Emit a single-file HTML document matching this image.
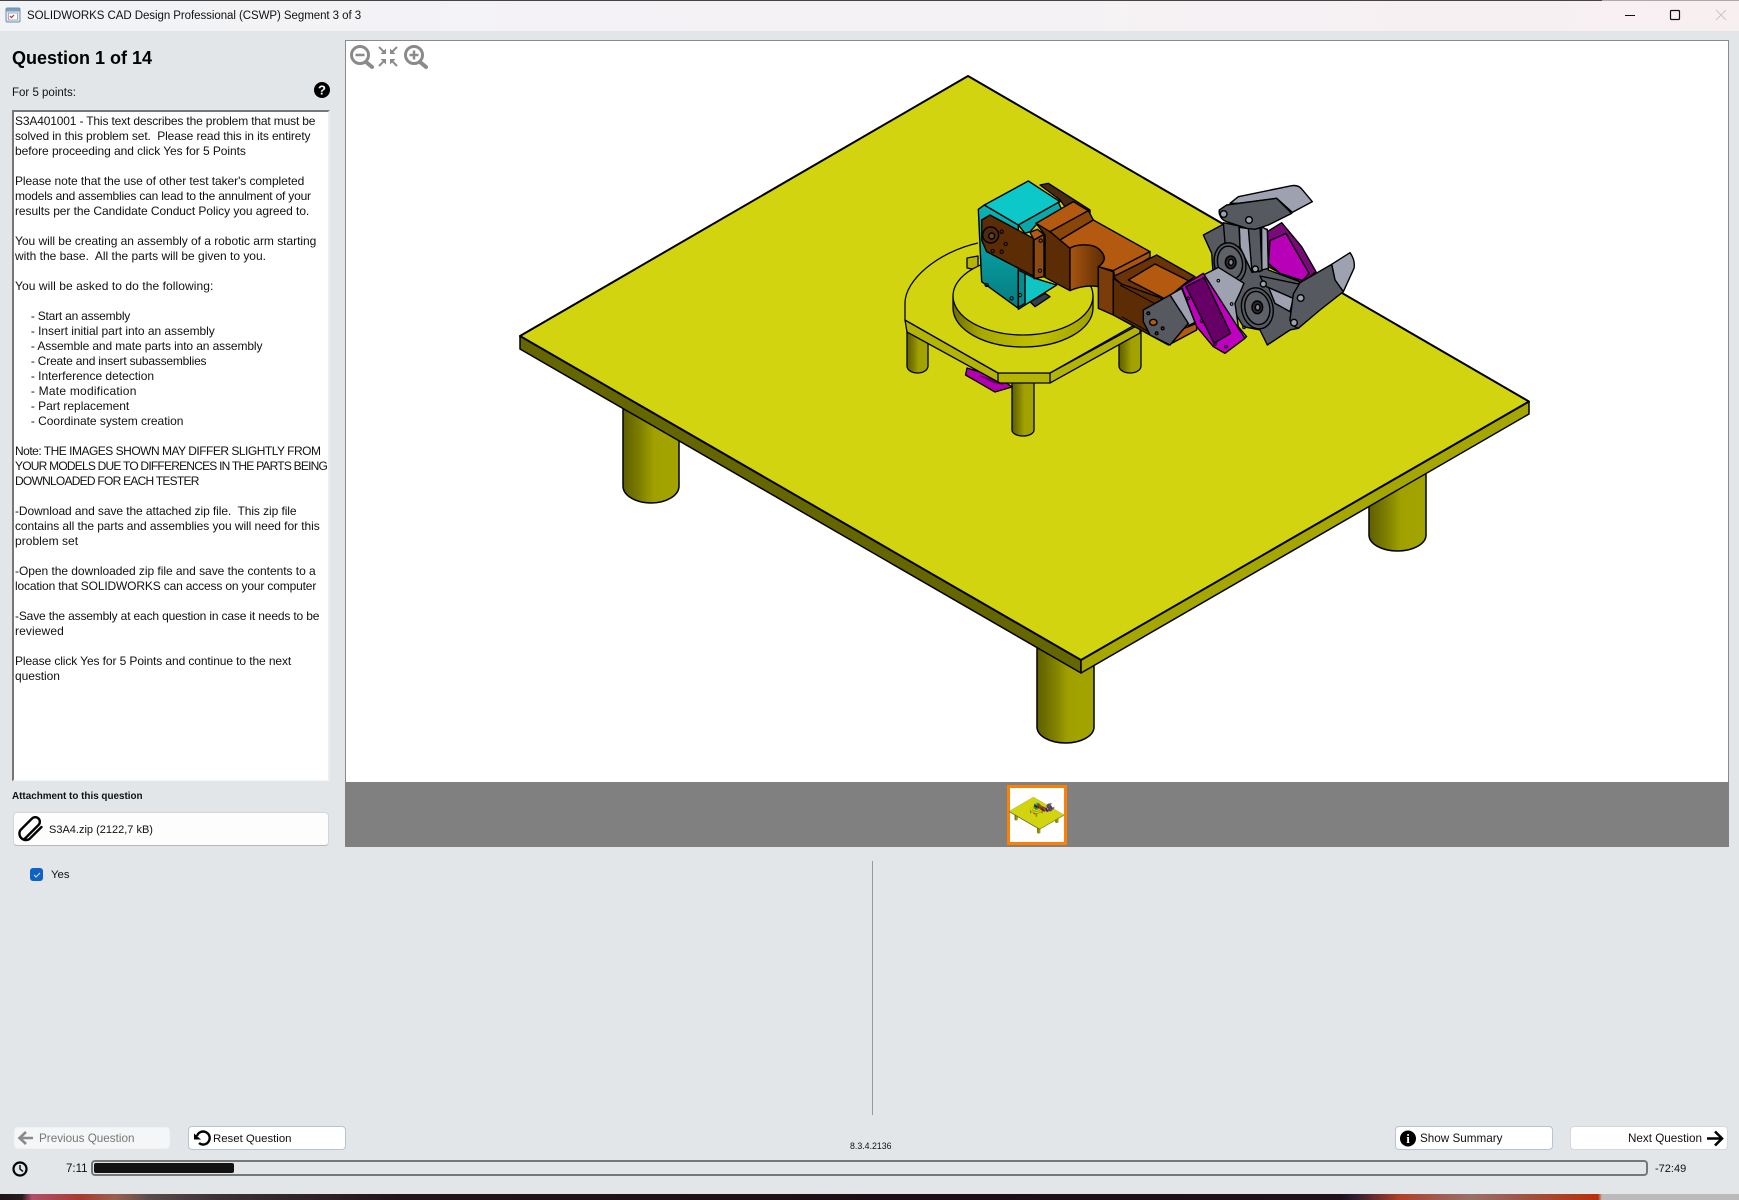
<!DOCTYPE html>
<html><head><meta charset="utf-8"><style>
html,body{margin:0;padding:0;width:1739px;height:1200px;overflow:hidden;background:#e2e6e9;font-family:"Liberation Sans",sans-serif;color:#111}
.a{position:absolute;white-space:nowrap}
.btn{position:absolute;box-sizing:border-box;background:#fdfdfd;border:1px solid #d5d8dc;border-radius:4px;font-size:11.7px;line-height:23px}
pre.a{margin:0;font:12px/15px "Liberation Sans",sans-serif;color:#111;white-space:pre;letter-spacing:-.16px}
</style></head><body>
<div class="a" style="left:0;top:0;width:1739px;height:31px;background:linear-gradient(90deg,#f2f3f6,#f5f2f5 60%,#f8eff1)"></div>
<div class="a" style="left:0;top:0;width:1602px;height:1px;background:#444"></div>
<div class="a" style="left:1602px;top:0;width:137px;height:1px;background:#aaa"></div>
<div class="a" style="left:27px;top:8px;font-size:11.5px;letter-spacing:-.06px;line-height:16px;">SOLIDWORKS CAD Design Professional (CSWP) Segment 3 of 3</div>
<div class="a" style="left:12px;top:46px;font-size:18px;font-weight:bold;line-height:24px;color:#000">Question 1 of 14</div>
<div class="a" style="left:12px;top:85px;font-size:11.5px;line-height:16px">For 5 points:</div>
<div class="a" style="left:12px;top:110px;width:318px;height:671px;box-sizing:border-box;background:#fff;border:1px solid #f4f5f6;border-top:2px solid #777;border-left:2px solid #777;border-right:2px solid #eceef0"></div>
<pre class="a" style="left:15px;top:114px">S3A401001 - This text describes the problem that must be
<span style="letter-spacing:-.11px">solved in this problem set.  Please read this in its entirety</span>
<span style="letter-spacing:-.06px">before proceeding and click Yes for 5 Points</span>

<span style="letter-spacing:-.07px">Please note that the use of other test taker's completed</span>
<span style="letter-spacing:-.2px">models and assemblies can lead to the annulment of your</span>
<span style="letter-spacing:-.06px">results per the Candidate Conduct Policy you agreed to.</span>

<span style="letter-spacing:-.03px">You will be creating an assembly of a robotic arm starting</span>
<span style="letter-spacing:-.01px">with the base.  All the parts will be given to you.</span>

<span style="letter-spacing:.07px">You will be asked to do the following:</span>

     <span style="letter-spacing:-.22px">- Start an assembly</span>
     <span style="letter-spacing:-.04px">- Insert initial part into an assembly</span>
     <span style="letter-spacing:-.11px">- Assemble and mate parts into an assembly</span>
     <span style="letter-spacing:-.2px">- Create and insert subassemblies</span>
     <span style="letter-spacing:-.01px">- Interference detection</span>
     <span style="letter-spacing:.23px">- Mate modification</span>
     <span style="letter-spacing:-.02px">- Part replacement</span>
     <span style="letter-spacing:-.03px">- Coordinate system creation</span>

<span style="letter-spacing:-.5px">Note: THE IMAGES SHOWN MAY DIFFER SLIGHTLY FROM</span>
<span style="letter-spacing:-.78px">YOUR MODELS DUE TO DIFFERENCES IN THE PARTS BEING</span>
<span style="letter-spacing:-.75px">DOWNLOADED FOR EACH TESTER</span>

<span style="letter-spacing:-.08px">-Download and save the attached zip file.  This zip file</span>
<span style="letter-spacing:-.07px">contains all the parts and assemblies you will need for this</span>
<span style="letter-spacing:.04px">problem set</span>

<span style="letter-spacing:-.04px">-Open the downloaded zip file and save the contents to a</span>
location that SOLIDWORKS can access on your computer

-Save the assembly at each question in case it needs to be
<span style="letter-spacing:.11px">reviewed</span>

<span style="letter-spacing:-.1px">Please click Yes for 5 Points and continue to the next</span>
<span style="letter-spacing:-.06px">question</span></pre>
<div class="a" style="left:12px;top:790px;font-size:9.9px;font-weight:bold;line-height:14px">Attachment to this question</div>
<div class="btn" style="left:13px;top:812px;width:316px;height:34px;background:#fdfdfd;border-color:#d4d6da;border-bottom-color:#b5b7ba"></div>
<div class="a" style="left:49px;top:822px;font-size:11px;line-height:16px">S3A4.zip (2122,7 kB)</div>
<div class="a" style="left:30px;top:868px;width:13px;height:13px;background:#0f62c5;border-radius:3px"></div>
<div class="a" style="left:51px;top:867px;font-size:11.4px;line-height:16px">Yes</div>
<div class="a" style="left:872px;top:861px;width:1px;height:254px;background:#9a9a9a"></div>

<div class="a" style="left:345px;top:40px;width:1384px;height:742px;box-sizing:border-box;background:#fff;border:1px solid #8a8a8a;border-bottom:none"></div>
<div class="a" style="left:345px;top:782px;width:1384px;height:65px;background:#808080"></div>
<div class="a" style="left:1007px;top:785px;width:60px;height:60px;box-sizing:border-box;background:#fff;border:3px solid #ff7f00"></div>

<div class="btn" style="left:14px;top:1127px;width:156px;height:22px;background:#f5f6f7;border-color:#f0f1f2;color:#777;padding-left:24px;line-height:22px">Previous Question</div>
<div class="btn" style="left:188px;top:1126px;width:158px;height:24px;background:#fff;border-color:#b5c5d5;padding-left:24px;font-size:11.4px;line-height:24px">Reset Question</div>
<div class="btn" style="left:1395px;top:1126px;width:158px;height:24px;background:#fff;border-color:#b5c5d5;padding-left:24px">Show Summary</div>
<div class="btn" style="left:1570px;top:1126px;width:158px;height:24px;background:#fff;border-color:#d5d8dc;text-align:right;padding-right:25px">Next Question</div>
<div class="a" style="left:850px;top:1140px;font-size:8.800px;line-height:12px">8.3.4.2136</div>
<div class="a" style="left:66px;top:1161px;font-size:11.5px;line-height:16px">7:11</div>
<div class="a" style="left:91px;top:1160px;width:1557px;height:16px;box-sizing:border-box;border:2px solid #777;border-radius:4px"></div>
<div class="a" style="left:94px;top:1163px;width:140px;height:10px;background:#111;border-radius:2px"></div>
<div class="a" style="left:1655px;top:1161px;font-size:11px;line-height:16px">-72:49</div>
<div class="a" style="left:0;top:1194px;width:1739px;height:6px;background:linear-gradient(90deg,#1c1414 0,#2a1a1c 22px,#b0506a 32px,#a83a30 80px,#9a6050 115px,#5a4a4a 150px,#3c3034 220px,#241418 400px,#1c0e14 900px,#201018 1340px,#2a1a30 1352px,#b0402a 1400px,#98706a 1470px,#a05040 1530px,#b8300a 1598px,#bbb 1602px,#bbb 1739px)"></div>

<svg class="a" style="left:0;top:0" width="1739" height="1200" viewBox="0 0 1739 1200">
<defs>
<linearGradient id="leg" x1="0" x2="1" y1="0" y2="0"><stop offset="0" stop-color="#5f5f00"/><stop offset=".3" stop-color="#7e7e00"/><stop offset=".55" stop-color="#a0a000"/><stop offset="1" stop-color="#a4a400"/></linearGradient>
<linearGradient id="disk" x1="0" x2="1" y1="0" y2="0"><stop offset="0" stop-color="#6f6f00"/><stop offset=".2" stop-color="#a8a800"/><stop offset=".6" stop-color="#c0c000"/><stop offset="1" stop-color="#a0a000"/></linearGradient>
<linearGradient id="notch" x1="0" x2="1" y1="0" y2="0"><stop offset="0" stop-color="#a85510"/><stop offset="1" stop-color="#5c2c04"/></linearGradient>
<linearGradient id="teal" x1="0" x2="0" y1="0" y2="1"><stop offset="0" stop-color="#0bb4b4"/><stop offset="1" stop-color="#057c80"/></linearGradient>
<g id="scene" stroke-linejoin="round">
  <g stroke="#000" stroke-width="1.500">
    <path d="M623,400V486A28,17 0 0 0 679,486V440L623,400Z" fill="url(#leg)"/>
    <path d="M1037,640V727A28.500,16 0 0 0 1094,727V640Z" fill="url(#leg)"/>
    <path d="M1369,480V535A28.500,16 0 0 0 1426,535V450Z" fill="url(#leg)"/>
    <path d="M520,336L1081,660V673L520,349Z" fill="#666600"/>
    <path d="M1081,660L1529,401.500L1529,414L1081,673Z" fill="#a6a600"/>
    <path d="M968,76L1529,401.500L1081,660L520,336Z" fill="#d2d410" stroke-width="2"/>
  </g>
  <g stroke="#000" stroke-width="1.300">
    <path d="M907,325V366A10.500,7 0 0 0 928,366V340Z" fill="url(#leg)"/>
    <path d="M1119,340V366A11,7 0 0 0 1141,366V330Z" fill="url(#leg)"/>
    <path d="M1012,380V430A11,6 0 0 0 1034,430V380Z" fill="url(#leg)"/>
    <path d="M967,368L965.500,375L995,392L1012,387L1000,378Z" fill="#b000b0"/>
    <path d="M978,375L993,383L1004,385L998,380Z" fill="#660066" stroke="none"/>
    <path d="M905,320L998,373H1050L1140,324V333L1050,383H1000L907,332Z" fill="#b4b405"/>
    <path d="M998,373V383M1050,373V383" fill="none"/>
    <path d="M978,243C938,252 905,280 905,303V320L998,373H1050L1140,322L1140,250Z" fill="#d2d410" stroke="none"/>
    <path d="M978,243C938,252 905,280 905,303V320L998,373H1050L1140,322" fill="none"/>
    <path d="M967,258L978,256V270L967,268Z" fill="#b4b405"/>
    <path d="M953,296V308C953,330 985,347 1023,347C1061,347 1093,330 1093,308V296Z" fill="url(#disk)"/>
    <ellipse cx="1023" cy="296" rx="70" ry="39" fill="#d2d410"/>
  </g>
  <g transform="translate(950,170) scale(.33333)" stroke="#000" stroke-width="4.200">
    <path d="M270,45L295,40L420,120L420,140L345,110L330,90Z" fill="#4a2a10"/>
    <path d="M240,395L285,370L300,380L255,410Z" fill="#33404a"/>
    <path d="M85,118L103,105L205,165V415L95,335Z" fill="url(#teal)"/>
    <path d="M205,300L255,325L320,345L205,418Z" fill="#10c4c4"/>
    <path d="M205,300L225,310V400L205,412Z" fill="#078a8c"/>
    <path d="M103,105L235,33L330,95L205,165Z" fill="#0cc8c8"/>
    <path d="M205,165L325,97L338,125L258,165L240,185L225,190Z" fill="#0aa8a8"/>
    <path d="M95,150L120,135L250,205V318L110,245L95,210Z" fill="#5c2c04"/>
    <circle cx="122" cy="195" r="24" fill="#4d2a10"/><circle cx="125" cy="198" r="9" fill="#6a4420"/>
    <circle cx="155" cy="185" r="5" fill="none" stroke-width="3"/><circle cx="167" cy="222" r="5" fill="none" stroke-width="3"/><circle cx="155" cy="245" r="5" fill="none" stroke-width="3"/><circle cx="128" cy="243" r="5" fill="none" stroke-width="3"/>
    <circle cx="110" cy="345" r="5" fill="none" stroke-width="3"/><circle cx="185" cy="385" r="5" fill="none" stroke-width="3"/><circle cx="210" cy="375" r="5" fill="none" stroke-width="3"/>
    <path d="M258,160L300,180L330,210L360,235V362L285,322V195Z" fill="#5c2c04"/>
    <path d="M240,187L262,178L282,193L252,210Z" fill="#b35a10"/>
    <path d="M252,210L282,193V320L252,326Z" fill="#8a4a10"/>
    <circle cx="272" cy="212" r="5" fill="none" stroke-width="3"/><circle cx="270" cy="302" r="5" fill="none" stroke-width="3"/>
    <path d="M258,160L370,95L420,125L300,185Z" fill="#b35a10"/>
    <path d="M300,185L415,122L430,150L330,210Z" fill="#8a4508"/>
    <path d="M360,235C375,222 430,218 450,240C468,258 468,275 445,290V350C420,345 385,350 360,362Z" fill="url(#notch)"/>
    <path d="M330,210L430,150L600,245L490,302L445,290C468,275 468,258 450,240C430,218 375,222 360,235Z" fill="#b35a10"/>
    <path d="M445,290L490,305V435L445,415Z" fill="#7a3c08"/>
    <path d="M490,302L600,245V262L497,328Z" fill="#a85510"/>
  </g>
  <g transform="translate(880,160) scale(.33333)" stroke="#000" stroke-width="4.200">
    <path d="M700,350L830,285L945,350L870,400L860,420L725,375Z" fill="#6a3408"/>
    <path d="M700,355L725,372L860,420L865,555L700,465Z" fill="#5c2c04"/>
    <path d="M720,375L860,450M725,470L860,545" fill="none" stroke-width="3"/>
    <path d="M745,360L825,312L925,362L858,418Z" fill="#b35a10"/>
    <path d="M875,520L950,490V510L875,550Z" fill="#b35a10"/>
    <path d="M870,405L905,385L945,487L925,497Z" fill="#9da1b0"/>
    <path d="M790,450L870,405L925,490L870,555L810,525L790,485Z" fill="#565a60"/>
    <ellipse cx="820" cy="487" rx="11" ry="9" fill="#b35a10"/>
    <circle cx="805" cy="460" r="4" fill="none"/><circle cx="830" cy="520" r="4" fill="none"/><circle cx="848" cy="505" r="4" fill="none"/>
  </g>
  <g transform="translate(1180,170) scale(.33333)" stroke="#000" stroke-width="4.200">
    <path d="M262,185L305,158L365,230L408,305L375,332L330,325L265,290Z" fill="#7a0a7a"/>
    <path d="M270,212L318,190L387,310L368,332L300,310L265,280Z" fill="#b800b8"/>
    <path d="M70,195L135,160L262,178L265,300L360,335L340,372L330,450L355,475L330,480L262,525L240,480L190,470L100,320L95,250Z" fill="#565a60"/>
    <path d="M178,172L208,176L240,305L215,305L180,232Z" fill="#9da1b0"/>
    <path d="M245,170L262,180L265,295L245,300Z" fill="#9da1b0"/>
    <path d="M130,158L177,168L180,232L135,218Z" fill="#565a60"/>
    <path d="M205,175L240,168L246,302L216,307Z" fill="#565a60"/>
    <path d="M265,350L340,385L330,425L285,400Z" fill="#9da1b0"/>
    <path d="M240,318L360,343L365,365L340,385L255,348Z" fill="#565a60"/>
    <ellipse cx="150" cy="280" rx="47" ry="62" transform="rotate(-12 150 280)" fill="#565a60"/>
    <ellipse cx="150" cy="278" rx="37" ry="50" transform="rotate(-12 150 278)" fill="#5e6268"/>
    <ellipse cx="152" cy="277" rx="16" ry="19" fill="#2a2a2e"/><ellipse cx="153" cy="277" rx="7" ry="9" fill="#888"/>
    <path d="M70,315L115,292L192,340L180,368L165,400L175,470L200,500L165,520Z" fill="#9da1b0"/>
    <ellipse cx="232" cy="415" rx="47" ry="62" transform="rotate(-12 232 415)" fill="#565a60"/>
    <ellipse cx="232" cy="414" rx="37" ry="50" transform="rotate(-12 232 414)" fill="#5e6268"/>
    <ellipse cx="232" cy="412" rx="16" ry="19" fill="#2a2a2e"/><ellipse cx="233" cy="412" rx="7" ry="9" fill="#888"/>
    <path d="M5,350L70,310L195,505L135,550L100,530L50,470Z" fill="#c000c0"/>
    <path d="M18,350L72,322L152,490L102,520Z" fill="#660066"/>
    <circle cx="115" cy="332" r="4" fill="none" stroke-width="3"/><circle cx="155" cy="402" r="4" fill="none" stroke-width="3"/><circle cx="192" cy="472" r="4" fill="none" stroke-width="3"/><circle cx="25" cy="385" r="4" fill="none" stroke-width="3"/><circle cx="65" cy="453" r="4" fill="none" stroke-width="3"/><circle cx="105" cy="522" r="4" fill="none" stroke-width="3"/><circle cx="138" cy="530" r="4" fill="none" stroke-width="3"/>
    <path d="M150,100L175,80L335,47C350,45 360,50 366,58L397,95L337,127L290,85L175,100Z" fill="#9da1b0"/>
    <path d="M118,120L140,105L290,85L335,130L265,165L225,178L200,175L140,155C125,150 115,135 118,120Z" fill="#565a60"/>
    <circle cx="131" cy="132" r="10" fill="#9da1b0"/><circle cx="207" cy="150" r="10" fill="#9da1b0"/><circle cx="226" cy="297" r="9" fill="#9da1b0"/><circle cx="250" cy="342" r="9" fill="#9da1b0"/>
    <path d="M455,283L510,248C522,265 525,280 522,295L490,365L465,330Z" fill="#9da1b0"/>
    <path d="M330,450L340,372L360,338L455,283L465,330L490,365L420,420L355,475C340,470 332,460 330,450Z" fill="#565a60"/>
    <circle cx="362" cy="384" r="10" fill="#9da1b0"/><circle cx="342" cy="458" r="10" fill="#9da1b0"/>
  </g>
</g>
</defs>
<use href="#scene"/>
<g transform="translate(980.700,792.900) scale(.0545)" style="filter:blur(.25px)"><use href="#scene"/></g>

<rect x="6" y="8" width="14" height="14" rx="1.500" fill="#dfe8f2" stroke="#6f8fa8"/><rect x="6.500" y="8.500" width="13" height="3" fill="#7aa0c0"/><rect x="8.500" y="13" width="9" height="7" fill="#fff" stroke="#aab"/><path d="M10,16l1.500,1.500l2.500,-2.500" stroke="#d22" fill="none" stroke-width="1.200"/>
<path d="M1625,15.500H1635" stroke="#111" stroke-width="1"/><rect x="1670.500" y="10.500" width="9" height="9" rx="1" fill="none" stroke="#111" stroke-width="1.200"/><path d="M1716,10L1726,20M1726,10L1716,20" stroke="#c8c8c8" stroke-width="1"/>
<g fill="none" stroke="#8a8a8a" stroke-width="3">
<circle cx="360" cy="55" r="8.500"/><path d="M366,62L372,67" stroke-width="4" stroke-linecap="round"/><path d="M355.500,55H364.500" stroke-width="2.500"/>
<circle cx="414" cy="55" r="8.500"/><path d="M420,62L426,67" stroke-width="4" stroke-linecap="round"/><path d="M409.500,55H418.500M414,50.500V59.500" stroke-width="2.500"/>
<path d="M379,47L385,53M397,47L391,53M379,66L385,60M397,66L391,60" stroke-width="2"/>
</g>
<path d="M386,54V48.500L380.500,54ZM390,54V48.500L395.500,54ZM386,59V64.500L380.500,59ZM390,59V64.500L395.500,59Z" fill="#8a8a8a"/>
<circle cx="322" cy="90" r="8" fill="#000"/><text x="322" y="94.500" font-family="Liberation Sans,sans-serif" font-size="13" font-weight="bold" fill="#fff" text-anchor="middle">?</text>
<path d="M24,838L38,824a4.500,4.500 0 0 0 -6.500,-6.500L20,829a6.500,6.500 0 0 0 9,9L41,826" transform="translate(.5,1)" fill="none" stroke="#000" stroke-width="2.400" stroke-linecap="round"/>
<path d="M34,875l2,2l4,-4" fill="none" stroke="#cfe0f5" stroke-width="1.100"/>
<path d="M33,1138H20M26,1132L19.500,1138L26,1144" fill="none" stroke="#8a8a8a" stroke-width="2.600"/>
<path d="M1707,1138.500H1722M1715,1131.500L1722,1138.500L1715,1145.500" fill="none" stroke="#000" stroke-width="2.600"/>
<path d="M197,1136A6.500,6.500 0 1 1 199,1143" fill="none" stroke="#000" stroke-width="2.400"/><path d="M194,1133.500V1139.500H201Z" fill="#000"/>
<circle cx="1408" cy="1138.500" r="8" fill="#000"/><text x="1408" y="1143" font-family="Liberation Serif,serif" font-size="13" font-weight="bold" fill="#fff" text-anchor="middle">i</text>
<circle cx="20" cy="1169" r="6.500" fill="none" stroke="#000" stroke-width="2.200"/><path d="M20,1165V1169L23,1171.500" fill="none" stroke="#000" stroke-width="1.400"/>
</svg>
</body></html>
